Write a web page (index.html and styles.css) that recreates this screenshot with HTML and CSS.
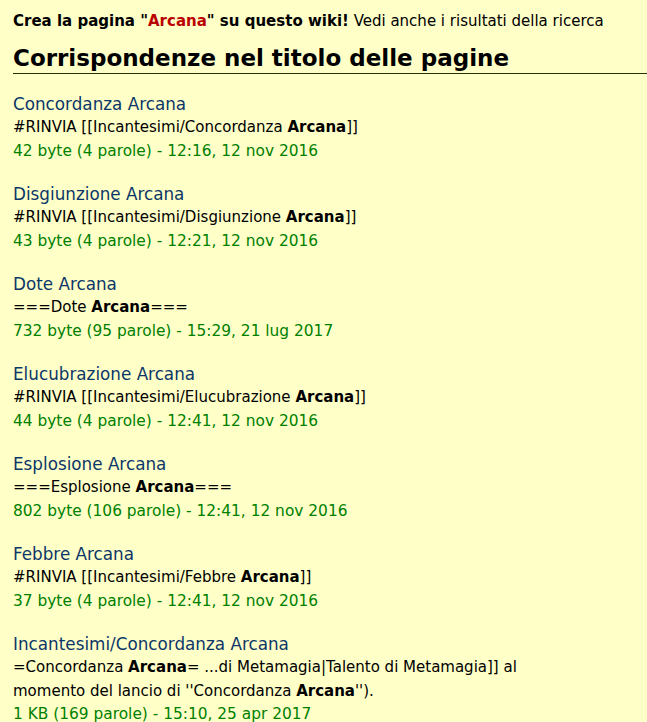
FILE: index.html
```html
<!DOCTYPE html>
<html lang="it">
<head>
<meta charset="utf-8">
<title>Risultati della ricerca</title>
<link rel="stylesheet" href="styles.css">
</head>
<body>
<div class="content">
  <p class="create"><b>Crea la pagina "<span class="new">Arcana</span>" su questo wiki!</b> Vedi anche i risultati della ricerca</p>
  <h2 class="section">Corrispondenze nel titolo delle pagine</h2>
  <ul class="results">
    <li class="result">
      <div class="heading"><a href="#">Concordanza Arcana</a></div>
      <div class="snippet">#RINVIA [[Incantesimi/Concordanza <b>Arcana</b>]]</div>
      <div class="data">42 byte (4 parole) - 12:16, 12 nov 2016</div>
    </li>
    <li class="result">
      <div class="heading"><a href="#">Disgiunzione Arcana</a></div>
      <div class="snippet">#RINVIA [[Incantesimi/Disgiunzione <b>Arcana</b>]]</div>
      <div class="data">43 byte (4 parole) - 12:21, 12 nov 2016</div>
    </li>
    <li class="result">
      <div class="heading"><a href="#">Dote Arcana</a></div>
      <div class="snippet">===Dote <b>Arcana</b>===</div>
      <div class="data">732 byte (95 parole) - 15:29, 21 lug 2017</div>
    </li>
    <li class="result">
      <div class="heading"><a href="#">Elucubrazione Arcana</a></div>
      <div class="snippet">#RINVIA [[Incantesimi/Elucubrazione <b>Arcana</b>]]</div>
      <div class="data">44 byte (4 parole) - 12:41, 12 nov 2016</div>
    </li>
    <li class="result">
      <div class="heading"><a href="#">Esplosione Arcana</a></div>
      <div class="snippet">===Esplosione <b>Arcana</b>===</div>
      <div class="data">802 byte (106 parole) - 12:41, 12 nov 2016</div>
    </li>
    <li class="result">
      <div class="heading"><a href="#">Febbre Arcana</a></div>
      <div class="snippet">#RINVIA [[Incantesimi/Febbre <b>Arcana</b>]]</div>
      <div class="data">37 byte (4 parole) - 12:41, 12 nov 2016</div>
    </li>
    <li class="result">
      <div class="heading"><a href="#">Incantesimi/Concordanza Arcana</a></div>
      <div class="snippet">=Concordanza <b>Arcana</b>= ...di Metamagia|Talento di Metamagia]] al<br>momento del lancio di ''Concordanza <b>Arcana</b>'').</div>
      <div class="data">1 KB (169 parole) - 15:10, 25 apr 2017</div>
    </li>
  </ul>
</div>
</body>
</html>
```

FILE: styles.css
```css
html, body {
  margin: 0;
  padding: 0;
  background: #ffffc8;
}
body {
  font-family: "DejaVu Sans", sans-serif;
  color: #000;
}
.content {
  padding: 9px 0 0 13px;
}
.create {
  margin: 0;
  font-size: 15px;
  line-height: 24px;
}
.create .new {
  color: #ba0000;
}
.section {
  margin: 10px 0 0 0;
  font-size: 23px;
  font-weight: bold;
  line-height: 30px;
  padding-bottom: 0;
  border-bottom: 1px solid #1f3300;
}
.results {
  list-style: none;
  margin: 19px 0 0 0;
  padding: 0;
}
.result {
  margin-bottom: 20px;
}
.heading {
  font-size: 16.8px;
  line-height: 23px;
}
.heading a {
  color: #0b3768;
  text-decoration: none;
}
.snippet {
  font-size: 15px;
  line-height: 23.5px;
}
.data {
  font-size: 15.4px;
  line-height: 23.5px;
  color: #008000;
}
```
